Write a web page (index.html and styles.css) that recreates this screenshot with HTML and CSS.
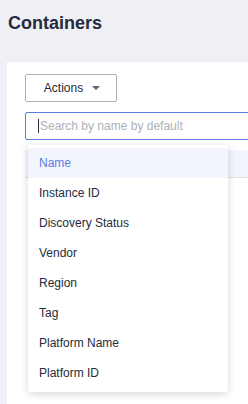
FILE: index.html
```html
<!DOCTYPE html>
<html lang="en">
<head>
  <meta charset="UTF-8">
  <meta name="viewport" content="width=device-width, initial-scale=1.0">
  <title>Containers</title>
  <link rel="stylesheet" href="styles.css">
</head>
<body>
  <h1 class="page-title">Containers</h1>
  <div class="panel">
    <button class="actions-btn">Actions <span class="caret"></span></button>
    <div class="search-wrap">
      <div class="search-box"><span class="cursor"></span><span class="placeholder">Search by name by default</span></div>
      <ul class="dropdown">
        <li class="active">Name</li>
        <li>Instance ID</li>
        <li>Discovery Status</li>
        <li>Vendor</li>
        <li>Region</li>
        <li>Tag</li>
        <li>Platform Name</li>
        <li>Platform ID</li>
      </ul>
    </div>
    <div class="table-head"></div>
  </div>
</body>
</html>
```

FILE: styles.css
```css
html, body {
  height: 100%;
}
body {
  margin: 0;
  display: flex;
  flex-direction: column;
  background: #eef0f5;
  font-family: "Liberation Sans", Arial, sans-serif;
  color: #252b3a;
  overflow: hidden;
}
.page-title {
  margin: 0;
  padding: 11px 8px 0;
  font-size: 18px;
  line-height: 24px;
  font-weight: bold;
}
.panel {
  flex: 1;
  margin: 27px 0 0 7px;
  padding: 12px 0 0 18px;
  background: #fff;
  overflow: hidden;
}
.actions-btn {
  display: flex;
  align-items: center;
  justify-content: center;
  gap: 9px;
  width: 92px;
  height: 28px;
  padding: 0 0 0 2px;
  background: #fff;
  border: 1px solid #adb0b8;
  border-radius: 2px;
  font-family: inherit;
  font-size: 12px;
  color: #252b3a;
}
.caret {
  width: 0;
  height: 0;
  border-left: 4px solid transparent;
  border-right: 4px solid transparent;
  border-top: 4px solid #5e6270;
}
.search-wrap {
  position: relative;
  margin-top: 10px;
}
.search-box {
  display: flex;
  align-items: center;
  width: calc(100% + 20px);
  height: 28px;
  box-sizing: border-box;
  padding-left: 12px;
  border: 1px solid #5e7ce0;
  border-radius: 2px;
  font-size: 12px;
}
.cursor {
  width: 1px;
  height: 14px;
  background: #252b3a;
}
.placeholder {
  color: #adb0b8;
  margin-left: 1px;
}
.table-head {
  margin-top: 10px;
  height: 27px;
  background: #f3f5fc;
  border-bottom: 1px solid #dfe1e6;
}
.dropdown {
  position: absolute;
  top: 33px;
  left: 3px;
  width: 200px;
  margin: 0;
  padding: 3px 0 4px;
  list-style: none;
  background: #fff;
  border-radius: 2px;
  box-shadow: 0 2px 8px rgba(0, 0, 0, 0.16);
  z-index: 2;
}
.dropdown li {
  height: 30px;
  line-height: 30px;
  padding-left: 11px;
  font-size: 12px;
}
.dropdown li.active {
  background: #f2f5fc;
  color: #5e7ce0;
}
```
